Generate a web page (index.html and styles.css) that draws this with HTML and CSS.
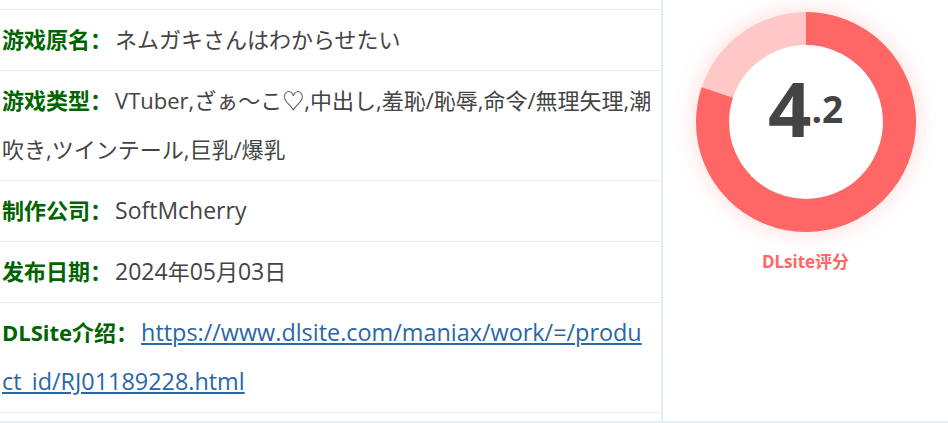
FILE: index.html
```html
<!DOCTYPE html>
<html lang="zh-CN">
<head>
<meta charset="utf-8">
<title>游戏信息</title>
<link rel="stylesheet" href="styles.css">
</head>
<body>
<div class="panel">
  <div class="info">
    <div class="row"><span class="label">游戏原名：</span>ネムガキさんはわからせたい</div>
    <div class="row"><span class="label">游戏类型：</span>VTuber,ざぁ～こ♡,中出し,羞恥/恥辱,命令/無理矢理,潮吹き,ツインテール,巨乳/爆乳</div>
    <div class="row"><span class="label">制作公司：</span><span class="en">SoftMcherry</span></div>
    <div class="row"><span class="label">发布日期：</span><span class="en">2024</span>年<span class="en">05</span>月<span class="en">03</span>日</div>
    <div class="row link-row"><span class="label">DLSite介绍：</span><a class="link" href="#">https://www.dlsite.com/maniax/work/=/product_id/RJ01189228.html</a></div>
  </div>
  <div class="score">
    <div class="donut">
      <svg class="ring" width="220" height="220" viewBox="0 0 220 220">
        <circle cx="110" cy="110" r="93.5" fill="none" stroke="#ffc8c8" stroke-width="33"/>
        <circle cx="110" cy="110" r="93.5" fill="none" stroke="#ff6666" stroke-width="33" stroke-dasharray="470 600" transform="rotate(-90 110 110)"/>
      </svg>
      <div class="value"><span class="big">4</span><span class="small">.2</span></div>
    </div>
    <div class="caption">DLsite评分</div>
  </div>
</div>
</body>
</html>
```

FILE: styles.css
```css
html, body {
  margin: 0;
  padding: 0;
  background: #fff;
}
body {
  font-family: "Open Sans", "Noto Sans CJK SC", sans-serif;
  color: #444;
}
.panel {
  display: grid;
  grid-template-columns: 663px 1fr;
  height: 421px;
  border-bottom: 2px solid #e6eef5;
}
.info {
  border-right: 2px solid #e6eef5;
  padding-top: 9px;
}
.row {
  border-top: 1px solid #e6eef5;
  padding: 5px 6px 6px 2px;
  font-size: 22px;
  line-height: 49px;
  word-break: break-all;
}
.row:last-child {
  border-bottom: 1px solid #e6eef5;
}
.link-row {
  line-break: anywhere;
  padding-right: 10px;
}
.label {
  color: #006400;
  font-weight: bold;
  margin-right: 3px;
}
.en {
  font-size: 23px;
  line-height: 1;
}
.link {
  color: #2b66a6;
  text-decoration: underline;
  font-size: 23.4px;
}
.score {
  display: flex;
  flex-direction: column;
  align-items: center;
  padding-top: 12px;
}
.donut {
  display: grid;
  width: 220px;
  height: 220px;
  border-radius: 50%;
  box-shadow: 0 0 22px rgba(255, 102, 102, 0.25);
}
.ring, .value {
  grid-area: 1 / 1;
}
.value {
  display: flex;
  align-items: baseline;
  justify-content: center;
  padding-top: 58px;
  font-family: "Open Sans", sans-serif;
  font-weight: bold;
  color: #444;
  line-height: 1;
}
.big {
  font-size: 76px;
}
.small {
  font-size: 37px;
  position: relative;
  top: -14px;
}
.caption {
  margin-top: 16px;
  color: #ff6666;
  font-weight: bold;
  font-size: 17px;
  font-family: "Open Sans", "Noto Sans CJK SC", sans-serif;
}
```
